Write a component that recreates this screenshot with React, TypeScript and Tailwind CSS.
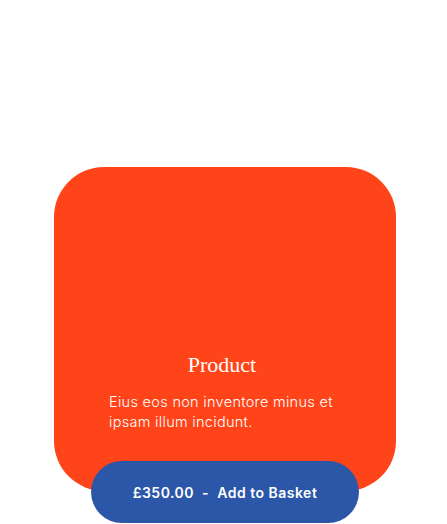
import React from 'react';

const ProductCard: React.FC = () => {
  return (
    <div className="flex flex-col items-center">
      <div className="w-[342px] h-[324px] rounded-[50px] bg-[#ff4419] flex flex-col justify-end px-[55px] pb-[59px]">
        <h3 className="text-center pr-[6px] text-white text-[22px] leading-[28px] font-normal" style={{ fontFamily: '"Liberation Serif", serif' }}>
          Product
        </h3>
        <p className="mt-[13px] text-white text-[14.5px] leading-[20px] font-light tracking-[0.3px]" style={{ fontFamily: 'Inter, sans-serif' }}>
          Eius eos non inventore minus et ipsam illum incidunt.
        </p>
      </div>
      <button
        className="-mt-[30px] w-[268px] h-[62px] rounded-[31px] bg-[#2c57a9] text-white text-[14px] font-semibold tracking-[0.5px] flex items-center justify-center"
        style={{ fontFamily: 'Inter, sans-serif' }}
      >
        £350.00&nbsp;&nbsp;-&nbsp;&nbsp;Add to Basket
      </button>
    </div>
  );
};

export default function App() {
  return (
    <div className="w-[447px] h-[524px] overflow-hidden bg-white pt-[167px] pl-[3px]">
      <ProductCard />
    </div>
  );
}
